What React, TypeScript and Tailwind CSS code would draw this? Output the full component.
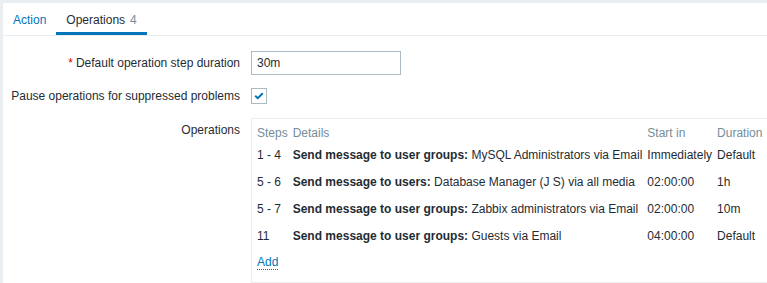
const OPS = [
	{ steps: "1 - 4", kind: "Send message to user groups:", target: "MySQL Administrators via Email", start: "Immediately", duration: "Default" },
	{ steps: "5 - 6", kind: "Send message to users:", target: "Database Manager (J S) via all media", start: "02:00:00", duration: "1h" },
	{ steps: "5 - 7", kind: "Send message to user groups:", target: "Zabbix administrators via Email", start: "02:00:00", duration: "10m" },
	{ steps: "11", kind: "Send message to user groups:", target: "Guests via Email", start: "04:00:00", duration: "Default" },
];

export default function App() {
	return (
		<div className="h-[283px] w-[767px] overflow-hidden bg-[#ebeef0] pl-[3px] pt-[3px] font-['Liberation_Sans',Arial,sans-serif] text-[12px] leading-[14px] text-[#1f2c33]">
			<div className="h-full bg-white">
				{/* Tabs */}
				<div className="flex h-[33px] border-b border-[#ebeef0]">
					<div className="flex items-center px-[10px] pt-[2px] text-[#0275b8]">Action</div>
					<div className="flex items-center border-b-[3px] border-[#0275b8] px-[10px] pt-[5px]">
						Operations<span className="ml-[5px] text-[#768d99]">4</span>
					</div>
				</div>

				{/* Form */}
				<div className="pt-[15px]">
					<div className="flex items-center">
						<div className="w-[237px] shrink-0 text-right">
							<span className="mr-[3px] text-[#d40000]">*</span>Default operation step duration
						</div>
						<input
							type="text"
							defaultValue="30m"
							className="ml-[11px] h-[24px] w-[150px] shrink-0 border border-[#acbbc2] px-[5px] text-[12px] text-[#1f2c33] outline-none"
						/>
					</div>

					<div className="mt-[13px] flex items-center">
						<div className="w-[237px] shrink-0 text-right">Pause operations for suppressed problems</div>
						<div className="ml-[11px] flex h-[16px] w-[16px] shrink-0 items-center justify-center border border-[#acbbc2]">
							<svg width="10" height="8" viewBox="0 0 10 8" fill="none" aria-hidden="true">
								<polyline points="1.2 3.8 3.8 6.2 8.8 1.2" stroke="#0275b8" strokeWidth="2" />
							</svg>
						</div>
					</div>

					<div className="mt-[14px] flex items-start">
						<div className="w-[237px] shrink-0 pt-[5px] text-right">Operations</div>
						<div className="ml-[11px] w-[540px] shrink-0 border border-[#ebeef0] px-[5px] pb-[8px]">
							<table className="border-collapse">
								<thead>
									<tr className="h-[22px] text-[#768d99]">
										<th className="pr-[5px] pt-[7px] text-left align-top font-normal">Steps</th>
										<th className="pr-[5px] pt-[7px] text-left align-top font-normal">Details</th>
										<th className="pr-[5px] pt-[7px] text-left align-top font-normal">Start in</th>
										<th className="pt-[7px] text-left align-top font-normal">Duration</th>
									</tr>
								</thead>
								<tbody>
									{OPS.map((op) => (
										<tr key={op.steps + op.target} className="h-[27px]">
											<td className="whitespace-nowrap pr-[5px]">{op.steps}</td>
											<td className="whitespace-nowrap pr-[5px]">
												<b>{op.kind}</b> {op.target}
											</td>
											<td className="whitespace-nowrap pr-[5px]">{op.start}</td>
											<td className="whitespace-nowrap">{op.duration}</td>
										</tr>
									))}
								</tbody>
							</table>
							<div className="mt-[3px] flex h-[22px] items-center">
								<a href="#" className="border-b border-dotted border-[#0275b8] leading-[13px] text-[#0275b8]">
									Add
								</a>
							</div>
						</div>
					</div>
				</div>
			</div>
		</div>
	);
}
